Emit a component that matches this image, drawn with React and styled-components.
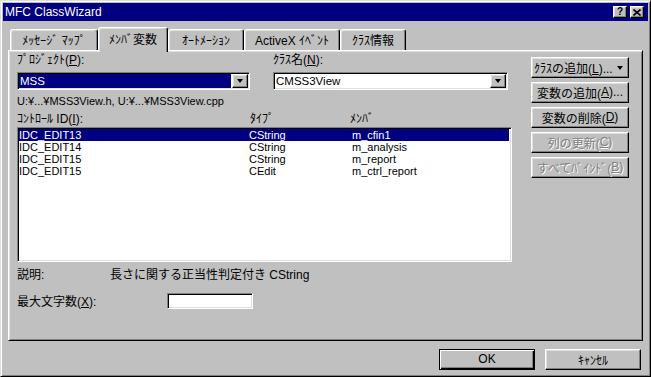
import React from "react";
import styled, { createGlobalStyle, css } from "styled-components";

const GlobalStyle = createGlobalStyle`
  * { box-sizing: border-box; }
  html, body { margin: 0; padding: 0; background: #c0c0c0; }
  body {
    font-family: "Liberation Sans", "Noto Sans CJK JP", sans-serif;
    font-size: 12px;
    color: #000;
  }
`;

const raised = css`
  border: 1px solid;
  border-color: #fff #000 #000 #fff;
  box-shadow: inset -1px -1px #808080, inset 1px 1px #dfdfdf;
`;

const sunken = css`
  border: 1px solid;
  border-color: #808080 #fff #fff #808080;
  box-shadow: inset 1px 1px #000, inset -1px -1px #dfdfdf;
`;

const Window = styled.div`
  width: 651px;
  height: 377px;
  display: flex;
  flex-direction: column;
  background: #c0c0c0;
  border: 1px solid;
  border-color: #dfdfdf #000 #000 #dfdfdf;
  box-shadow: inset 1px 1px #fff, inset -1px -1px #808080;
  padding: 2px;
`;

const TitleBar = styled.div`
  height: 18px;
  display: flex;
  align-items: center;
  gap: 3px;
  padding: 0 4px 0 2px;
  background: #000080;
  color: #fff;
  line-height: 18px;
`;

const Title = styled.span`
  flex: 1;
`;

const CaptionButton = styled.div`
  ${raised};
  width: 14px;
  height: 12px;
  display: flex;
  align-items: center;
  justify-content: center;
  background: #c0c0c0;
  color: #000;
  font-weight: bold;
  font-size: 10px;
  line-height: 10px;
`;

const Body = styled.div`
  flex: 1;
  display: flex;
  flex-direction: column;
  padding: 6px 5px 0 5px;
`;

const TabRow = styled.div`
  height: 23px;
  display: flex;
  align-items: flex-end;
  padding-left: 2px;
`;

const Tab = styled.div`
  position: relative;
  z-index: ${(p) => (p.$active ? 2 : 0)};
  width: ${(p) => p.$w}px;
  height: ${(p) => (p.$active ? 25 : 21)}px;
  margin-bottom: ${(p) => (p.$active ? -2 : 0)}px;
  padding-bottom: ${(p) => (p.$active ? 3 : 1)}px;
  display: flex;
  align-items: center;
  justify-content: center;
  background: #c0c0c0;
  border: 1px solid;
  border-bottom: none;
  border-color: #fff #000 transparent #fff;
  border-radius: 3px 3px 0 0;
  box-shadow: inset -1px 0 #808080, inset 1px 1px #dfdfdf;
  white-space: nowrap;
`;

const Panel = styled.div`
  height: 291px;
  display: flex;
  gap: 19px;
  padding: 0 13px 0 8px;
  border: 1px solid;
  border-color: #fff #000 #000 #fff;
  box-shadow: inset 1px 1px #dfdfdf, inset -1px -1px #808080;
`;

const LeftCol = styled.div`
  width: 495px;
  display: flex;
  flex-direction: column;
  padding-top: 2px;
`;

const ComboRow = styled.div`
  display: grid;
  grid-template-columns: 233px 235px;
  column-gap: 23px;
`;

const Field = styled.div`
  display: flex;
  flex-direction: column;
  gap: 5px;
`;

const Label = styled.div`
  height: 14px;
  line-height: 14px;
  white-space: nowrap;
`;

const Combo = styled.div`
  ${sunken};
  height: 18px;
  display: flex;
  padding: 1px;
  background: #fff;
`;

const ComboValue = styled.div`
  flex: 1;
  margin-right: 1px;
  padding-left: 1px;
  font-size: 11.5px;
  line-height: 14px;
  background: ${(p) => (p.$selected ? "#000080" : "transparent")};
  color: ${(p) => (p.$selected ? "#fff" : "#000")};
`;

const ComboArrow = styled.div`
  ${raised};
  width: 16px;
  height: 14px;
  background: #c0c0c0;
  display: flex;
  align-items: center;
  justify-content: center;
  &::after {
    content: "";
    border-left: 3.5px solid transparent;
    border-right: 3.5px solid transparent;
    border-top: 4px solid #000;
  }
`;

const TextLine = styled.div`
  margin-top: 4px;
  height: 14px;
  font-size: 11px;
  line-height: 14px;
  white-space: nowrap;
`;

const HeaderRow = styled.div`
  margin-top: 4px;
  height: 14px;
  line-height: 14px;
  display: grid;
  grid-template-columns: 233px 100px 1fr;
  white-space: nowrap;
`;

const List = styled.div`
  ${sunken};
  margin-top: 1px;
  height: 135px;
  padding: 1px;
  background: #fff;
`;

const ListRow = styled.div`
  height: 12px;
  font-size: 11px;
  line-height: 12px;
  display: grid;
  grid-template-columns: 230px 103px 1fr;
  margin-right: 1px;
  background: ${(p) => (p.$selected ? "#000080" : "transparent")};
  color: ${(p) => (p.$selected ? "#fff" : "#000")};
  white-space: nowrap;
`;

const DescRow = styled.div`
  margin-top: 6px;
  height: 14px;
  line-height: 14px;
  display: grid;
  grid-template-columns: 93px 1fr;
  white-space: nowrap;
`;

const MaxRow = styled.div`
  margin-top: 10px;
  height: 16px;
  display: grid;
  grid-template-columns: 150px 86px;
  align-items: center;
  white-space: nowrap;
`;

const EditBox = styled.div`
  ${sunken};
  height: 16px;
  background: #fff;
`;

const RightCol = styled.div`
  width: 98px;
  display: flex;
  flex-direction: column;
  gap: 4px;
  padding-top: 6px;
`;

const Button = styled.div`
  ${raised};
  width: ${(p) => (p.$w ? `${p.$w}px` : "100%")};
  height: 21px;
  display: flex;
  align-items: center;
  justify-content: ${(p) => (p.$split ? "space-between" : "center")};
  padding: ${(p) => (p.$split ? "0 5px 0 2px" : "0 2px 1px")};
  background: #c0c0c0;
  white-space: nowrap;
  color: ${(p) => (p.$disabled ? "#808080" : "#000")};
  text-shadow: ${(p) => (p.$disabled ? "1px 1px #fff" : "none")};
  ${(p) =>
    p.$default &&
    css`
      border-color: #000;
      box-shadow: inset 1px 1px #fff, inset -1px -1px #000,
        inset -2px -2px #808080;
    `}
`;

const DropMark = styled.span`
  width: 0;
  height: 0;
  border-left: 3.5px solid transparent;
  border-right: 3.5px solid transparent;
  border-top: 4px solid #000;
`;

const Footer = styled.div`
  display: flex;
  justify-content: flex-end;
  gap: 10px;
  padding: 8px 2px 0 0;
`;

const tabs = [
  { label: "ﾒｯｾｰｼﾞ ﾏｯﾌﾟ", w: 88 },
  { label: "ﾒﾝﾊﾞ変数", w: 70, active: true },
  { label: "ｵｰﾄﾒｰｼｮﾝ", w: 76 },
  { label: "ActiveX ｲﾍﾞﾝﾄ", w: 96 },
  { label: "ｸﾗｽ情報", w: 66 },
];

const rows = [
  ["IDC_EDIT13", "CString", "m_cfin1"],
  ["IDC_EDIT14", "CString", "m_analysis"],
  ["IDC_EDIT15", "CString", "m_report"],
  ["IDC_EDIT15", "CEdit", "m_ctrl_report"],
];

export default function App() {
  return (
    <>
      <GlobalStyle />
      <Window>
        <TitleBar>
          <Title>MFC ClassWizard</Title>
          <CaptionButton>?</CaptionButton>
          <CaptionButton>
            <svg width="8" height="7" viewBox="0 0 8 7">
              <path d="M0.5 0.5 L7.5 6.5 M7.5 0.5 L0.5 6.5" stroke="#000" strokeWidth="1.6" />
            </svg>
          </CaptionButton>
        </TitleBar>
        <Body>
          <TabRow>
            {tabs.map((t) => (
              <Tab key={t.label} $w={t.w} $active={t.active}>
                {t.label}
              </Tab>
            ))}
          </TabRow>
          <Panel>
            <LeftCol>
              <ComboRow>
                <Field>
                  <Label>
                    ﾌﾟﾛｼﾞｪｸﾄ(<u>P</u>):
                  </Label>
                  <Combo>
                    <ComboValue $selected>MSS</ComboValue>
                    <ComboArrow />
                  </Combo>
                </Field>
                <Field>
                  <Label>
                    ｸﾗｽ名(<u>N</u>):
                  </Label>
                  <Combo>
                    <ComboValue>CMSS3View</ComboValue>
                    <ComboArrow />
                  </Combo>
                </Field>
              </ComboRow>
              <TextLine>U:¥...¥MSS3View.h, U:¥...¥MSS3View.cpp</TextLine>
              <HeaderRow>
                <span>
                  ｺﾝﾄﾛｰﾙ ID(<u>I</u>):
                </span>
                <span>ﾀｲﾌﾟ</span>
                <span>ﾒﾝﾊﾞ</span>
              </HeaderRow>
              <List>
                {rows.map((r, i) => (
                  <ListRow key={i} $selected={i === 0}>
                    {r.map((c, j) => (
                      <span key={j}>{c}</span>
                    ))}
                  </ListRow>
                ))}
              </List>
              <DescRow>
                <span>説明:</span>
                <span>長さに関する正当性判定付き CString</span>
              </DescRow>
              <MaxRow>
                <span>
                  最大文字数(<u>X</u>):
                </span>
                <EditBox />
              </MaxRow>
            </LeftCol>
            <RightCol>
              <Button $split>
                <span>
                  ｸﾗｽの追加(<u>L</u>)...
                </span>
                <DropMark />
              </Button>
              <Button>
                変数の追加(<u>A</u>)...
              </Button>
              <Button>
                変数の削除(<u>D</u>)
              </Button>
              <Button $disabled>
                列の更新(<u>C</u>)
              </Button>
              <Button $disabled>
                すべてﾊﾞｲﾝﾄﾞ(<u>B</u>)
              </Button>
            </RightCol>
          </Panel>
          <Footer>
            <Button $w={96} $default>
              OK
            </Button>
            <Button $w={96}>ｷｬﾝｾﾙ</Button>
          </Footer>
        </Body>
      </Window>
    </>
  );
}
